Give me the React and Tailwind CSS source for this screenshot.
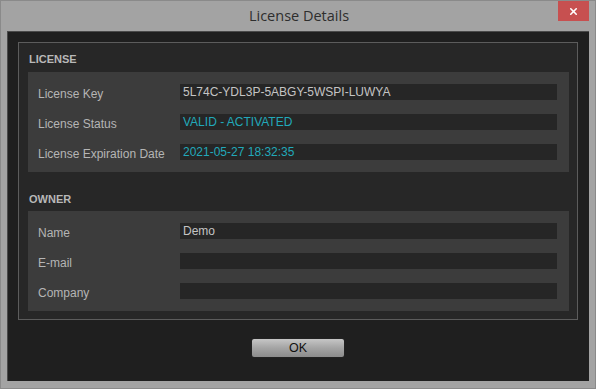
import { X } from "lucide-react";

const licenseRows = [
  { label: "License Key", value: "5L74C-YDL3P-5ABGY-5WSPI-LUWYA", accent: false },
  { label: "License Status", value: "VALID - ACTIVATED", accent: true },
  { label: "License Expiration Date", value: "2021-05-27 18:32:35", accent: true },
];

const ownerRows = [
  { label: "Name", value: "Demo" },
  { label: "E-mail", value: "" },
  { label: "Company", value: "" },
];

function Row({ label, value, accent }) {
  return (
    <div className="flex items-center h-4">
      <span className="w-[152px] pl-[10px] pt-[3px] text-[12px] leading-4 text-[#b5b5b5]">
        {label}
      </span>
      <div
        className={`flex-1 h-4 bg-[#262626] pl-[3px] text-[12px] leading-4 ${accent ? "text-[#22a9ba]" : "text-[#c4c4c4]"}`}
      >
        {value}
      </div>
    </div>
  );
}

function Panel({ rows }) {
  return (
    <div className="bg-[#3c3c3c] pt-3 pb-3 pr-3 flex flex-col gap-[14px]">
      {rows.map((r) => (
        <Row key={r.label} {...r} />
      ))}
    </div>
  );
}

export default function App() {
  return (
    <div
      className="w-[596px] h-[389px] bg-[#a3a3a3] border border-[#8a8a8a] flex flex-col"
      style={{ fontFamily: '"Liberation Sans", Arial, sans-serif' }}
    >
      {/* title bar */}
      <div className="relative h-[30px] flex items-center justify-center">
        <span
          className="text-[14.5px] text-[#2e2e2e] pb-[1px] pl-[2px]"
          style={{ fontFamily: '"Open Sans", "Noto Sans", sans-serif' }}
        >
          License Details
        </span>
        <div className="absolute right-[6px] top-0 w-[31px] h-[20px] bg-[#c75050] flex items-center justify-center">
          <X size={11} strokeWidth={3.5} className="text-white" />
        </div>
      </div>

      {/* content */}
      <div className="mx-[6px] h-[350px] bg-[#1f1f1f] border-t border-l border-[#4a4a4a] flex flex-col">
        <div className="mt-[10px] ml-[10px] w-[560px] border border-[#5c5c5c] bg-[#272727] pl-[9px] pr-2 pb-2">
          <div className="pt-2 pb-[5px] pl-[1px] text-[11px] font-bold leading-4 text-[#b8b8b8]">
            LICENSE
          </div>
          <Panel rows={licenseRows} />
          <div className="pt-[19px] pb-1 pl-[1px] text-[11px] font-bold leading-4 text-[#b8b8b8]">
            OWNER
          </div>
          <Panel rows={ownerRows} />
        </div>

        <button className="mt-[18px] ml-[243px] w-[94px] h-[20px] rounded-[3px] border border-[#222] bg-gradient-to-b from-[#c6c6c6] via-[#a4a4a4] to-[#8c8c8c] text-[12.5px] text-[#111] leading-none">
          OK
        </button>
      </div>
    </div>
  );
}
